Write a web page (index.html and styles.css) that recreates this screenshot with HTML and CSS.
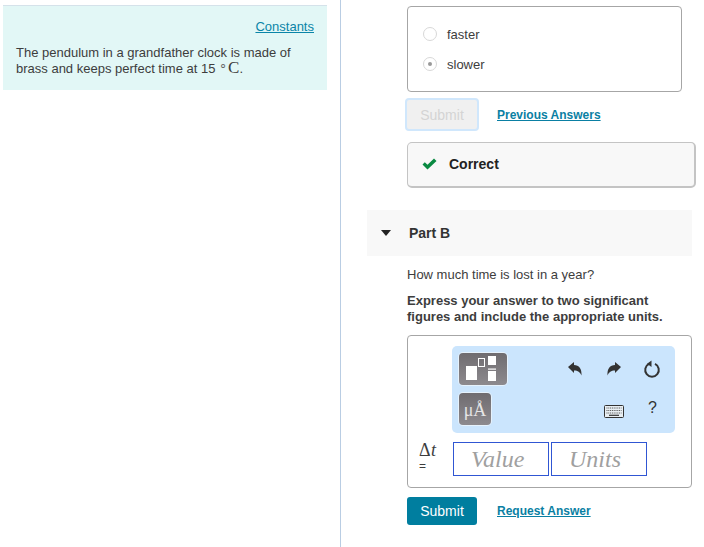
FILE: index.html
```html
<!DOCTYPE html>
<html lang="en">
<head>
<meta charset="utf-8">
<title>Pendulum</title>
<link rel="stylesheet" href="styles.css">
</head>
<body>
<main class="page">
  <aside class="left">
    <section class="intro">
      <div class="constants"><a href="#">Constants</a></div>
      <p>The pendulum in a grandfather clock is made of brass and keeps perfect time at 15 <span class="deg">∘</span><span class="math">C</span>.</p>
    </section>
  </aside>
  <section class="right">
    <div class="choices">
      <label class="choice"><span class="radio"></span>faster</label>
      <label class="choice"><span class="radio checked"></span>slower</label>
    </div>
    <div class="actions first">
      <button class="btn disabled" type="button">Submit</button>
      <a class="link" href="#">Previous Answers</a>
    </div>
    <div class="correct">
      <svg class="check" width="15" height="12" viewBox="0 0 15 12"><path d="M0.5 6.5 L2.8 4.2 L5.5 6.8 L12 0.5 L14.5 3 L5.5 11.5 Z" fill="#0a8a42"/></svg>
      <strong>Correct</strong>
    </div>
    <h2 class="part"><span class="caret"></span>Part B</h2>
    <div class="body">
      <p class="question">How much time is lost in a year?</p>
      <p class="instr">Express your answer to two significant figures and include the appropriate units.</p>
      <div class="answer">
        <div class="toolbar">
          <div class="tool-col">
            <span class="tool wide">
              <svg width="48" height="32" viewBox="0 0 48 32">
                <rect x="7" y="13" width="11" height="14" fill="#fff"/>
                <rect x="19.5" y="5.5" width="6" height="8" fill="none" stroke="#fff" stroke-width="1"/>
                <rect x="29" y="3" width="8" height="9" fill="#fff"/>
                <rect x="29" y="15.5" width="8" height="1.2" fill="#fff"/>
                <rect x="29" y="18" width="8" height="10" fill="#fff"/>
              </svg>
            </span>
            <span class="tool unit">μÅ</span>
          </div>
          <div class="tool-right">
            <div class="tool-row top">
              <svg width="16" height="16" viewBox="0 0 16 16"><path d="M1 6 L7 1 V4 C12 4 15 8 14.5 14.5 C13 11 11 9.5 7 9.5 V12 Z" fill="#333"/></svg>
              <svg class="redo" width="16" height="16" viewBox="0 0 16 16"><path d="M15 6 L9 1 V4 C4 4 1 8 1.5 14.5 C3 11 5 9.5 9 9.5 V12 Z" fill="#333"/></svg>
              <svg class="reload" width="18" height="18" viewBox="0 0 18 18"><path d="M6 3.8 A6.8 6.8 0 1 0 12 3.8" fill="none" stroke="#333" stroke-width="2"/><path d="M8.5 0.5 L8.5 7 L4 3.8 Z" fill="#333"/></svg>
            </div>
            <div class="tool-row bottom">
              <svg class="keys" width="20" height="13" viewBox="0 0 20 13"><rect x="0.5" y="0.5" width="19" height="12" rx="1" fill="#e8eef2" stroke="#333"/><path d="M2.5 3H17.5M2.5 5.5H17.5M2.5 8H17.5" stroke="#555" stroke-width="1.2" stroke-dasharray="1 0.8"/><path d="M5 10.3H15" stroke="#333" stroke-width="1.2"/></svg>
              <span class="help">?</span>
            </div>
          </div>
        </div>
        <div class="entry">
          <div class="label"><span class="delta">Δ<i>t</i></span><span class="eq">=</span></div>
          <span class="field">Value</span>
          <span class="field">Units</span>
        </div>
      </div>
      <div class="actions last">
        <button class="btn primary" type="button">Submit</button>
        <a class="link" href="#">Request Answer</a>
      </div>
    </div>
  </section>
</main>
</body>
</html>
```

FILE: styles.css
```css
* { box-sizing: border-box; }
html, body { margin: 0; height: 100%; }
body {
  font-family: "Liberation Sans", Arial, sans-serif;
  font-size: 13px;
  color: #3d3d3d;
  background: #fff;
  overflow: hidden;
}
p { margin: 0; }
.page { display: flex; height: 547px; }
.left {
  width: 341px;
  flex: none;
  padding: 5px 13px 0 3px;
  border-right: 1px solid #b9cde3;
}
.intro {
  height: 85px;
  background: #e2f7f6;
  border-top: 1px solid #d5e2ea;
  padding: 13px 13px 0 13px;
  line-height: 16px;
}
.constants { text-align: right; margin-bottom: 10px; }
.constants a { color: #0a85a8; }
.deg { font-size: 13px; color: #666; vertical-align: 4px; line-height: 0; margin-right: 1px; }
.math { font-family: "Liberation Serif", serif; font-size: 17px; line-height: 0; }
.right { flex: 1; padding: 6px 0 0 26px; }
.choices {
  width: 275px;
  height: 86px;
  margin-left: 40px;
  padding-top: 12px;
  border: 1px solid #a6a6a6;
  border-radius: 4px;
}
.choice { display: flex; align-items: center; height: 30px; padding-left: 15px; }
.radio {
  width: 14px;
  height: 14px;
  margin-right: 10px;
  border: 1px solid #d8d8d8;
  border-radius: 50%;
  display: flex;
  align-items: center;
  justify-content: center;
}
.radio.checked::after {
  content: "";
  width: 4px;
  height: 4px;
  border-radius: 50%;
  background: #999;
}
.actions { display: flex; align-items: center; }
.actions.first { margin: 6px 0 0 38px; }
.btn {
  font: 14px "Liberation Sans", Arial, sans-serif;
  width: 70px;
  height: 28px;
  border-radius: 3px;
  border: 0;
  padding: 0;
}
.btn.disabled {
  width: 74px;
  height: 33px;
  background: #f0f0f0;
  color: #d4d4d4;
  border: 2px solid #d0e7fc;
  border-radius: 4px;
}
.btn.primary { background: #007e9f; color: #fff; }
.link { font-size: 12px; font-weight: bold; color: #0a7fa3; margin-left: 20px; }
.actions.first .link { margin-left: 18px; }
.correct {
  display: flex;
  align-items: center;
  width: 289px;
  height: 46px;
  margin: 11px 0 0 40px;
  padding: 0 0 2px 14px;
  background: #f8f8f8;
  border: 1px solid #c4c4c4;
  border-right-width: 2px;
  border-bottom-width: 2px;
  border-radius: 5px;
  color: #222;
  font-size: 14px;
}
.check { margin-right: 12px; }
.part {
  display: flex;
  align-items: center;
  width: 325px;
  height: 46px;
  margin: 22px 0 0;
  padding-left: 14px;
  background: #f8f8f8;
  font-size: 14px;
  color: #333;
}
.caret {
  width: 0;
  height: 0;
  margin-right: 18px;
  border: 5px solid transparent;
  border-top: 6px solid #222;
  border-bottom: 0;
}
.body { padding: 11px 0 0 40px; }
.question { line-height: 16px; }
.instr { font-weight: bold; line-height: 16px; margin-top: 10px; width: 270px; }
.answer {
  width: 285px;
  height: 153px;
  margin-top: 10px;
  padding: 10px 0 0 44px;
  border: 1px solid #a6a6a6;
  border-radius: 4px;
}
.toolbar {
  display: flex;
  justify-content: space-between;
  width: 223px;
  height: 87px;
  padding: 7px 14px 0 7px;
  background: #cbe5fd;
  border-radius: 5px;
}
.tool-col { display: flex; flex-direction: column; gap: 8px; align-items: flex-start; }
.tool {
  display: flex;
  align-items: center;
  justify-content: center;
  height: 32px;
  border-radius: 4px;
  background: linear-gradient(#6f6c70, #8d8a8e);
  box-shadow: 0 0 0 1px #e6f2fc;
  color: #fff;
}
.tool.wide { width: 48px; }
.tool.unit {
  width: 32px;
  font: 18px "Liberation Serif", serif;
  color: #e6e6e6;
  padding-top: 3px;
}
.tool-right { width: 94px; display: flex; flex-direction: column; }
.tool-row { display: flex; align-items: center; }
.tool-row.top { height: 32px; }
.redo { margin-left: 23px; }
.reload { margin-left: 21px; }
.tool-row.bottom { margin-top: 7px; height: 32px; padding-left: 37px; }
.keys { margin-top: 6px; margin-right: 24px; }
.help { font-size: 16px; color: #333; }
.entry { display: flex; align-items: flex-start; margin: 9px 0 0 -33px; }
.label { width: 34px; display: flex; flex-direction: column; }
.delta { font: 18px/16px "Liberation Serif", serif; letter-spacing: 0.5px; }
.eq { font-size: 12px; line-height: 14px; margin-top: 1px; }
.field {
  width: 96px;
  height: 34px;
  margin-right: 2px;
  padding-left: 17px;
  border: 1px solid #3056d3;
  font: italic 24px/33px "Liberation Serif", serif;
  color: #a0a0a0;
}
.actions.last { margin-top: 9px; }
```
